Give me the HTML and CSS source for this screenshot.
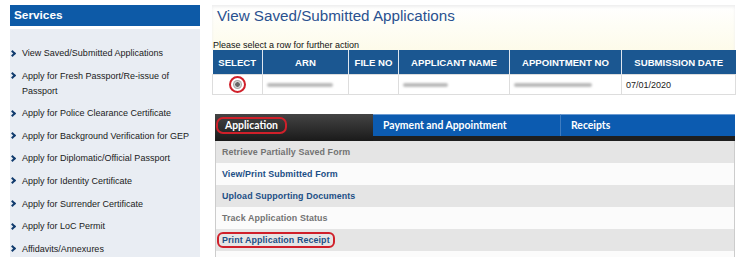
FILE: index.html
```html
<!DOCTYPE html>
<html>
<head>
<meta charset="utf-8">
<link rel="stylesheet" href="styles.css">
</head>
<body>
<div class="page">
  <div class="sidebar">
    <div class="side-head">Services</div>
    <ul class="side-list">
      <li>View Saved/Submitted Applications</li>
      <li>Apply for Fresh Passport/Re-issue of Passport</li>
      <li>Apply for Police Clearance Certificate</li>
      <li>Apply for Background Verification for GEP</li>
      <li>Apply for Diplomatic/Official Passport</li>
      <li>Apply for Identity Certificate</li>
      <li>Apply for Surrender Certificate</li>
      <li>Apply for LoC Permit</li>
      <li>Affidavits/Annexures</li>
    </ul>
  </div>

  <div class="main">
    <div class="title-box">
      <h1 class="title">View Saved/Submitted Applications</h1>
      <div class="hint">Please select a row for further action</div>
    </div>

    <table class="apps">
      <colgroup>
        <col class="c-sel"><col class="c-arn"><col class="c-file">
        <col class="c-name"><col class="c-appt"><col class="c-date">
      </colgroup>
      <tr>
        <th>SELECT</th>
        <th>ARN</th>
        <th>FILE NO</th>
        <th>APPLICANT NAME</th>
        <th>APPOINTMENT NO</th>
        <th>SUBMISSION DATE</th>
      </tr>
      <tr>
        <td class="center"><span class="mark"><span class="radio"></span></span></td>
        <td><span class="blur arn"></span></td>
        <td></td>
        <td><span class="blur name"></span></td>
        <td><span class="blur appt"></span></td>
        <td>07/01/2020</td>
      </tr>
    </table>

    <div class="tabs">
      <div class="tab-bar">
        <div class="tab active"><span class="mark-pill">Application</span></div>
        <div class="tab pay">Payment and Appointment</div>
        <div class="tab rec">Receipts</div>
      </div>
      <ul class="actions">
        <li class="off">Retrieve Partially Saved Form</li>
        <li>View/Print Submitted Form</li>
        <li>Upload Supporting Documents</li>
        <li class="off">Track Application Status</li>
        <li><span class="mark-pill">Print Application Receipt</span></li>
        <li></li>
      </ul>
    </div>
  </div>
</div>
</body>
</html>
```

FILE: styles.css
```css
body { margin: 0; background: #fff; font-family: "Liberation Sans", Arial, sans-serif; }

.page { display: flex; gap: 12px; padding: 5px 0 0 10px; height: 257px; box-sizing: border-box; overflow: hidden; }

/* left services column */
.sidebar { width: 190px; flex: none; }
.side-head { height: 21px; line-height: 21px; background: #0d5aa7; color: #fff;
             font-weight: bold; font-size: 11.8px; padding-left: 4px; }
.side-list { list-style: none; margin: 3px 0 0; padding: 17px 0 0 0; background: #e9edf3;
             height: 228px; box-sizing: border-box; overflow: hidden; }
.side-list li { position: relative; padding-left: 12px; font-size: 9px; line-height: 15px;
                color: #1a1a1a; margin-bottom: 7.6px; }
.side-list li::before { content: ""; position: absolute; left: 0; top: 4.5px; width: 3px; height: 3px;
                        border-right: 2px solid #123c6e; border-top: 2px solid #123c6e;
                        transform: rotate(45deg); }

/* right content */
.main { width: 523px; flex: none; }
.title-box { height: 45px; background: linear-gradient(#fff, #fdfbea); position: relative;
             box-shadow: inset 0 2px 3px #eee; }
.title { margin: 0; padding: 1px 0 0 5px; font-weight: normal; font-size: 15.2px; line-height: 20px; color: #2a5190; }
.hint { position: absolute; left: 1px; bottom: 0; font-size: 9px; color: #111; }

.apps { width: 523px; border-collapse: collapse; table-layout: fixed; font-size: 9.6px; }
.apps th { background: #1b5791; color: #fff; font-weight: bold; height: 24px; padding: 0;
           border-left: 1px solid #dfe6ef; white-space: nowrap; }
.apps th:first-child { border-left: none; }
.apps td { height: 19px; border: 1px solid #ddd; padding: 0 4px; color: #222; background: #fff; font-size: 9px; }
.apps .center { text-align: center; }
.c-sel { width: 50px; } .c-arn { width: 86px; } .c-file { width: 50px; }
.c-name { width: 111px; } .c-appt { width: 112px; } .c-date { width: 114px; }

.radio { display: inline-block; width: 5px; height: 5px; border-radius: 50%; background: #666;
         border: 1.5px solid #eee; box-shadow: 0 0 0 1px #aaa; vertical-align: middle; }
.mark { display: inline-block; padding: 3px 3px; border: 2px solid #d0202a; border-radius: 50%; line-height: 0; }

.blur { display: inline-block; height: 4px; background: #bbb; border-radius: 2px; filter: blur(1.2px);
        vertical-align: middle; }
.blur.arn { width: 66px; }
.blur.name { width: 45px; }
.blur.appt { width: 78px; }

/* tabs */
.tabs { margin: 19px 0 0 3px; width: 520px; }
.tab-bar { display: flex; height: 22px; border-bottom: 5px solid #1e1e1e;
           font-family: Lato, "Liberation Sans", sans-serif; font-weight: bold; font-size: 10.4px; }
.tab { color: #fff; line-height: 22px; }
.tab.active { width: 158px; background: linear-gradient(#444, #1a1a1a); height: 27px; padding-left: 1px; box-sizing: border-box; }
.tab.pay { width: 187px; background: #0c5bb0; padding-left: 10px; box-sizing: border-box;
           border-top: 1px solid #6c9bd1; line-height: 21px; }
.tab.rec { flex: 1; background: #0c5bb0; padding-left: 10px; border-left: 1px solid #3f7cc0;
           border-top: 1px solid #6c9bd1; line-height: 21px; }
.mark-pill { display: inline-block; border: 2px solid #d0202a; border-radius: 7px; padding: 0 6px; line-height: 13px; }
.tab .mark-pill { margin-top: 2px; padding: 0 7px 0 7px; }

.actions { list-style: none; margin: 0; padding: 0; border-left: 1px solid #ccc; border-right: 1px solid #ccc;
           font-weight: bold; font-size: 8.9px; letter-spacing: 0.1px; }
.actions li { height: 22px; line-height: 23px; padding-left: 6px; color: #1c4f86; background: #fbfbfb; }
.actions li:nth-child(odd) { background: #e5e5e5; }
.actions li.off { color: #737373; }
.actions .mark-pill { margin-left: -5px; padding: 0 3px; border-radius: 6px; line-height: 12px; }
```
